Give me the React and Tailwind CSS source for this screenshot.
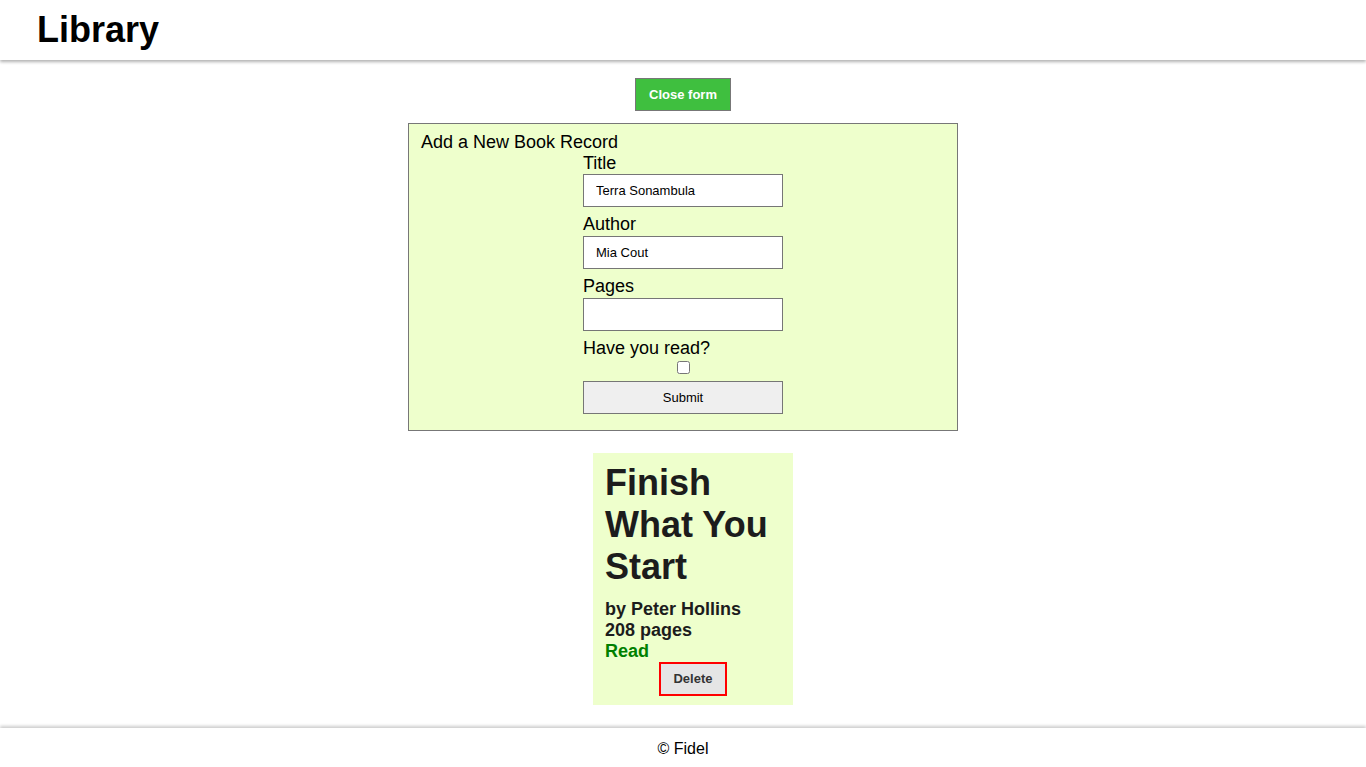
import React, { useState } from "react";

const fieldLabel = "text-[18px] leading-[21px]";
const fieldInput =
  "mt-px h-[33px] w-full border border-[#767676] bg-white px-3 text-[13px] text-black outline-none";

const App = () => {
  const [title, setTitle] = useState("Terra Sonambula");
  const [author, setAuthor] = useState("Mia Cout");
  const [pages, setPages] = useState("");
  const [read, setRead] = useState(false);

  return (
    <div className="flex min-h-screen flex-col bg-white font-['Liberation_Sans',Arial,sans-serif] text-black">
      <header className="relative z-10 flex h-[60px] items-center px-[37px] shadow-[0_2px_3px_rgba(0,0,0,0.3)]">
        <h1 className="text-[36px] font-bold leading-none">Library</h1>
      </header>

      <main className="flex flex-1 flex-col items-center pb-[21px]">
        <button
          type="button"
          className="mt-[18px] h-[33px] w-[96px] border border-[#777] bg-[#3fbf3f] text-[13px] font-bold text-white"
        >
          Close form
        </button>

        <form
          onSubmit={(e) => e.preventDefault()}
          className="mt-3 w-[550px] border border-[#777] bg-[#eeffcc] px-3 pb-4 pt-[7px]"
        >
          <h2 className="h-[21px] pt-px text-[18px] leading-[21px]">Add a New Book Record</h2>
          <div className="mx-auto flex w-[200px] flex-col">
            <label className={`${fieldLabel} h-[21px] pt-px`}>Title</label>
            <input className={fieldInput} value={title} onChange={(e) => setTitle(e.target.value)} />
            <label className={`${fieldLabel} mt-[7px]`}>Author</label>
            <input className={fieldInput} value={author} onChange={(e) => setAuthor(e.target.value)} />
            <label className={`${fieldLabel} mt-[7px]`}>Pages</label>
            <input className={fieldInput} value={pages} onChange={(e) => setPages(e.target.value)} />
            <label className={`${fieldLabel} mt-[7px]`}>Have you read?</label>
            <input
              type="checkbox"
              checked={read}
              onChange={(e) => setRead(e.target.checked)}
              className="mt-[2px] h-[13px] w-[13px] self-center"
            />
            <button
              type="submit"
              className="mt-[7px] h-[33px] w-full border border-[#767676] bg-[#efefef] text-[13px]"
            >
              Submit
            </button>
          </div>
        </form>

        <div className="ml-5 mt-[22px] flex w-[200px] flex-col bg-[#eeffcc] px-3 pb-[9px] pt-[9px] text-[#1c1c1c]">
          <h3 className="text-[36px] font-bold leading-[42px]">Finish What You Start</h3>
          <p className="mt-[11px] text-[18px] font-bold leading-[21px]">by Peter Hollins</p>
          <p className="text-[18px] font-bold leading-[21px]">208 pages</p>
          <p className="text-[18px] font-bold leading-[21px] text-[#008000]">Read</p>
          <button
            type="button"
            className="h-[34px] w-[68px] self-center border-2 border-[#ff0000] bg-[#e5e5e5] text-[13px] font-bold text-[#333]"
          >
            Delete
          </button>
        </div>
      </main>

      <footer className="flex h-[39px] items-center justify-center pt-[2px] shadow-[0_-2px_3px_rgba(0,0,0,0.2)]">
        <p className="text-[16px]">© Fidel</p>
      </footer>
    </div>
  );
};

export default App;
